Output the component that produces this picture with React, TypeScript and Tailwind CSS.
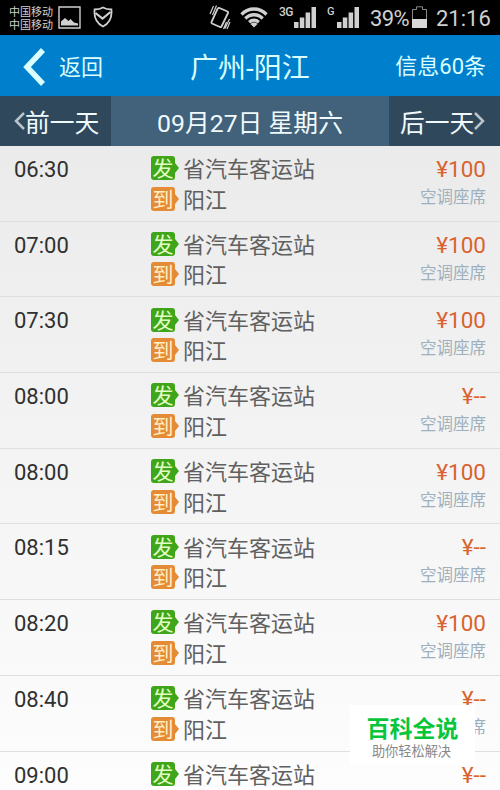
import React from 'react';

const trips = [
  { time: '06:30', price: '¥100' },
  { time: '07:00', price: '¥100' },
  { time: '07:30', price: '¥100' },
  { time: '08:00', price: '¥--' },
  { time: '08:00', price: '¥100' },
  { time: '08:15', price: '¥--' },
  { time: '08:20', price: '¥100' },
  { time: '08:40', price: '¥--' },
  { time: '09:00', price: '¥--' },
];

function Signal() {
  return (
    <svg className="h-[21px] w-[22px] text-[#d0d0d0]" viewBox="0 0 22 21" fill="currentColor">
      <path d="M0 15h4.500v6H0zM5.800 10.500h4.500V21H5.800zM11.600 5.500h4.500V21h-4.500zM17.500 0H22v21h-4.500z" />
    </svg>
  );
}

function StatusBar() {
  return (
    <div className="flex h-[35px] shrink-0 bg-black text-[#d0d0d0]">
      <div className="mt-[6px] ml-[9px] w-[46px] text-[11px] leading-[13px] whitespace-nowrap">
        <div>中国移动</div>
        <div>中国移动</div>
      </div>
      {/* Screenshot and shield notifications */}
      <svg className="mt-[6px] ml-[3px] h-[23px] w-[23px]" viewBox="0 0 23 23" fill="none">
        <path d="M1 1h21v21H1z" stroke="currentColor" strokeWidth="1.400" />
        <path d="M3 19.500v-4l4-3.500 3.500 3 2-2 3.500 3.500 4 1v2z" fill="currentColor" />
      </svg>
      <svg className="mt-[6px] ml-[12px] h-[22px] w-[20px]" viewBox="0 0 20 22" fill="none" stroke="currentColor" strokeWidth="1.800">
        <path d="M10 1.500c2.600 1.600 5.200 2 8.400 2 .8 7.500-1.600 13.500-8.400 17C3.200 17 .8 11 1.600 3.500c3.200 0 5.800-.4 8.400-2z" />
        <path d="M2.500 7 9.500 12.500l8-6.500" strokeWidth="2.200" />
      </svg>

      {/* Vibrate */}
      <svg className="mt-[5px] ml-[96px] h-[25px] w-[22px]" viewBox="0 0 22 25" fill="none" stroke="currentColor">
        <path d="M10.500 3 18.500 6.500Q19.500 7 19 8L12.500 21.500Q12 22.500 11 22L3 18.500Q2 18 2.500 17L8.500 4Q9 2.500 10.500 3z" strokeWidth="1.800" />
        <path d="M4.500 1 1 9M7.500 .5 3.500 10M20.500 14 16 23.500M17.500 17 14.500 24M21 17l-3 7" strokeWidth="1.200" />
      </svg>
      <svg className="mt-[7px] ml-[9px] h-[21px] w-[28px]" viewBox="0 0 28 21" fill="none" stroke="currentColor" strokeWidth="3.300">
        <path d="M1.500 7.500c7.200-7.300 17.800-7.300 25 0M5.300 11.500c5-5 12.400-5 17.400 0M9.200 15.200c2.800-2.600 6.800-2.600 9.600 0" />
        <path d="M14 15.500c1.500 0 2.800.6 3.500 1.500L14 20.500 10.500 17c.7-.9 2-1.500 3.500-1.500z" fill="currentColor" stroke="none" />
      </svg>
      <span className="mt-[5px] ml-[11px] w-[13px] text-[12px] leading-[14px] font-medium tracking-[-0.5px]">3G</span>
      <div className="mt-[7px] ml-[2px]"><Signal /></div>
      <span className="mt-[5px] ml-[11px] w-[8px] text-[11px] leading-[14px] font-medium">G</span>
      <div className="mt-[7px] ml-[2px]"><Signal /></div>
      <span className="mt-[5px] ml-[11px] w-[41px] text-[22px] leading-[28px] tracking-[-0.6px]">39%</span>
      <svg className="mt-[6px] ml-px h-[22px] w-[15px]" viewBox="0 0 15 22" fill="none">
        <path d="M.5 21.500v-18H4.500V.8h6v2.700h4v18z" stroke="#888" />
        <path d="M0 13h15v9H0z" fill="#d8d8d8" />
      </svg>
      <span className="mt-[5px] ml-[9px] text-[22px] leading-[28px]">21:16</span>
    </div>
  );
}

function Header() {
  return (
    <div className="grid h-[61px] shrink-0 grid-cols-3 items-center bg-[#007fcd] pt-[5px] text-[#d9ffff]">
      <div className="flex items-center gap-[14px] pl-[23px]">
        <svg className="mt-[-3px] h-[38px] w-[22px]" viewBox="0 0 22 38" fill="none" stroke="currentColor" strokeWidth="5.500">
          <path d="M20 2 4 19l16 17" />
        </svg>
        <span className="text-[22px] leading-8">返回</span>
      </div>
      <h1 className="pt-px text-center text-[28px] leading-10 whitespace-nowrap">广州-阳江</h1>
      <span className="mr-[14px] mb-[2px] text-right text-[22px] leading-8">信息60条</span>
    </div>
  );
}

function DateBar() {
  return (
    <div className="flex h-[50px] shrink-0 items-center bg-[#42617a] text-[24.800px] text-[#f0fafd]">
      <div className="flex h-full w-[111px] items-center bg-[#30485b] pt-[5px] pl-[14px]">
        <svg className="mt-[-6px] h-[18px] w-[11px] text-[#b9c4cc]" viewBox="0 0 11 18" fill="none" stroke="currentColor" strokeWidth="2.500">
          <path d="M10 1 2 9l8 8" />
        </svg>
        <span className="whitespace-nowrap">前一天</span>
      </div>
      <div className="flex-1 pt-[5px] text-center whitespace-nowrap">09月27日 星期六</div>
      <div className="flex h-full w-[111px] items-center bg-[#30485b] pt-[5px] pl-[11px]">
        <span className="whitespace-nowrap">后一天</span>
        <svg className="mt-[-6px] h-[18px] w-[11px] text-[#b9c4cc]" viewBox="0 0 11 18" fill="none" stroke="currentColor" strokeWidth="2.500">
          <path d="m1 1 8 8-8 8" />
        </svg>
      </div>
    </div>
  );
}

function Stop({ kind, name }: { kind: 'from' | 'to'; name: string }) {
  const from = kind === 'from';
  return (
    <div className="flex h-[30.500px] items-center">
      <span className={`flex h-6 w-6 items-center justify-center rounded-[3px] pt-[2px] text-[21px] leading-[22px] ${from ? 'bg-[#3fa61b] text-[#e2ffc4]' : 'bg-[#e58a35] text-[#fff0c8]'}`}>
        {from ? '发' : '到'}
      </span>
      <svg className={`h-[10px] w-[4px] ${from ? 'text-[#3fa61b]' : 'text-[#e58a35]'}`} viewBox="0 0 4 10" fill="currentColor">
        <path d="M0 0 4 5 0 10z" />
      </svg>
      <span className="ml-[4px] pt-[4px] text-[22px] leading-[30px] whitespace-nowrap text-[#606060]">{name}</span>
    </div>
  );
}

export default function App() {
  return (
    <div className="relative flex h-[790px] w-[500px] flex-col overflow-hidden font-[Roboto,'Noto_Sans_CJK_SC',sans-serif]">
      <StatusBar />
      <Header />
      <DateBar />
      <div className="min-h-0 flex-1 overflow-hidden bg-linear-to-b from-[#ebebeb] to-[#fdfdfd]">
        {trips.map((trip, i) => (
          <div key={i} className="flex h-[75.700px] border-b border-[#dfdfe0] pt-[7px]">
            <span className="w-[151px] pt-[2px] pl-[14px] text-[22px] leading-[30px] text-[#303030]">{trip.time}</span>
            <div>
              <Stop kind="from" name="省汽车客运站" />
              <Stop kind="to" name="阳江" />
            </div>
            <div className="ml-auto pt-px pr-[14px] text-right">
              <div className="text-[22.500px] leading-[30px] text-[#d9632f]">{trip.price}</div>
              <div className="pt-[2px] text-[16.500px] leading-[24px] text-[#9eb0bd]">空调座席</div>
            </div>
          </div>
        ))}
      </div>
      {/* Watermark */}
      <div className="absolute top-[705px] left-[350px] h-[60px] w-[125px] bg-white text-center">
        <div className="mt-[11px] text-[23px] leading-[28px] font-bold text-[#08c63c]">百科全说</div>
        <div className="mr-[2px] text-[13.200px] leading-[16px] text-[#888]">助你轻松解决</div>
      </div>
    </div>
  );
}
